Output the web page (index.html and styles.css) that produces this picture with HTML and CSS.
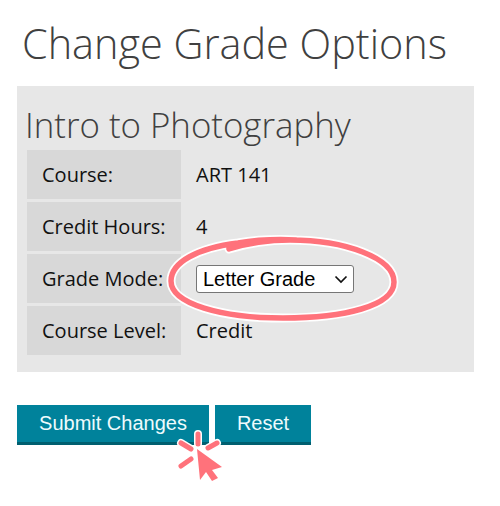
FILE: index.html
```html
<!DOCTYPE html>
<html lang="en">
<head>
    <meta charset="UTF-8">
    <meta name="viewport" content="width=device-width, initial-scale=1.0">
    <title>Change Grade Options</title>
    <link rel="stylesheet" href="styles.css">
</head>
<body>
    <div class="page">
        <h1>Change Grade Options</h1>
        <div class="panel">
            <h2>Intro to Photography</h2>
            <div class="info-row">
                <div class="info-label">Course:</div>
                <div class="info-value">ART 141</div>
            </div>
            <div class="info-row">
                <div class="info-label">Credit Hours:</div>
                <div class="info-value">4</div>
            </div>
            <div class="info-row">
                <div class="info-label">Grade Mode:</div>
                <div class="info-value">
                    <div class="select-wrap">
                        <select class="grade-select">
                            <option>Letter Grade</option>
                        </select>
                        <svg class="select-arrow" width="14" height="9" viewBox="0 0 14 9" fill="none">
                            <path d="M1.5 1.5L7 7L12.5 1.5" stroke="#111" stroke-width="1.7"/>
                        </svg>
                    </div>
                </div>
            </div>
            <div class="info-row">
                <div class="info-label">Course Level:</div>
                <div class="info-value">Credit</div>
            </div>
        </div>
        <div class="actions">
            <button class="action-btn submit-btn">Submit Changes</button>
            <button class="action-btn reset-btn">Reset</button>
        </div>

        <!-- hand drawn callouts over the form -->
        <svg class="callouts" width="500" height="506" viewBox="0 0 500 506" fill="none">
            <g stroke-linecap="round" stroke-linejoin="round">
                <path class="halo" d="M229 249C248 243 268 240 290 240C345 240 394 258 394 282C394 306 344 318 283 318C222 318 171 304 171 281C171 262 198 248 238 243C256 240 276 239 296 240"/>
                <path class="ring" d="M229 249C248 243 268 240 290 240C345 240 394 258 394 282C394 306 344 318 283 318C222 318 171 304 171 281C171 262 198 248 238 243C256 240 276 239 296 240"/>
                <path class="ray-halo" d="M198 434V444M181 443L191 449M217 443L208 448M181 466L191 459"/>
                <path class="ray" d="M198 434V444M181 443L191 449M217 443L208 448M181 466L191 459"/>
            </g>
            <path class="pointer" d="M197 449L222 467L212 470L218 478L212 481L206 472L200 480Z"/>
        </svg>
    </div>
</body>
</html>
```

FILE: styles.css
```css
body { margin: 0; background-color: #fff; font-family: "Open Sans", sans-serif; }
.page { position: relative; width: 500px; height: 506px; padding: 17px 17px 0; box-sizing: border-box; overflow: hidden; }
h1 { margin: 0 0 17px 5px; font-size: 41.4px; line-height: 52px; font-weight: 300; color: #404040; }
h2 { margin: 0 0 2px; font-size: 34.8px; line-height: 46px; font-weight: 300; color: #404040; }
.panel { width: 457px; height: 286px; padding: 16px 10px 0 8px; box-sizing: border-box; background-color: #e7e7e7; }
.info-row { display: flex; align-items: stretch; margin-bottom: 3px; margin-left: 2px; height: 49px; }
.info-label { width: 154px; padding-left: 15px; box-sizing: border-box; display: flex; align-items: center; background-color: #d8d8d8; font-size: 20px; color: #111; }
.info-value { padding-left: 15px; display: flex; align-items: center; font-size: 20px; color: #111; }
.select-wrap { position: relative; display: flex; }
.grade-select { appearance: none; width: 158px; height: 28px; padding: 0 0 0 6px; border: 1px solid #767676; border-radius: 3px; font-family: "Liberation Sans", sans-serif; font-size: 20px; background-color: #fff; color: #000; }
.select-arrow { position: absolute; right: 6px; top: 10px; }
.actions { display: flex; gap: 6px; margin-top: 33px; }
button { height: 40px; border: none; border-bottom: 3px solid #005f70; color: #eefbfd; background-color: #00829b; font-family: "Liberation Sans", sans-serif; font-size: 20px; padding: 0; }
.submit-btn { width: 192px; }
.reset-btn { width: 96px; }
.callouts { position: absolute; left: 0; top: 0; }
.halo { stroke: #fff; stroke-width: 9px; }
.ring { stroke: #ff727b; stroke-width: 5.5px; }
.ray-halo { stroke: #fff; stroke-width: 8px; }
.ray { stroke: #ff727b; stroke-width: 5px; }
.pointer { fill: #ff727b; }
```
